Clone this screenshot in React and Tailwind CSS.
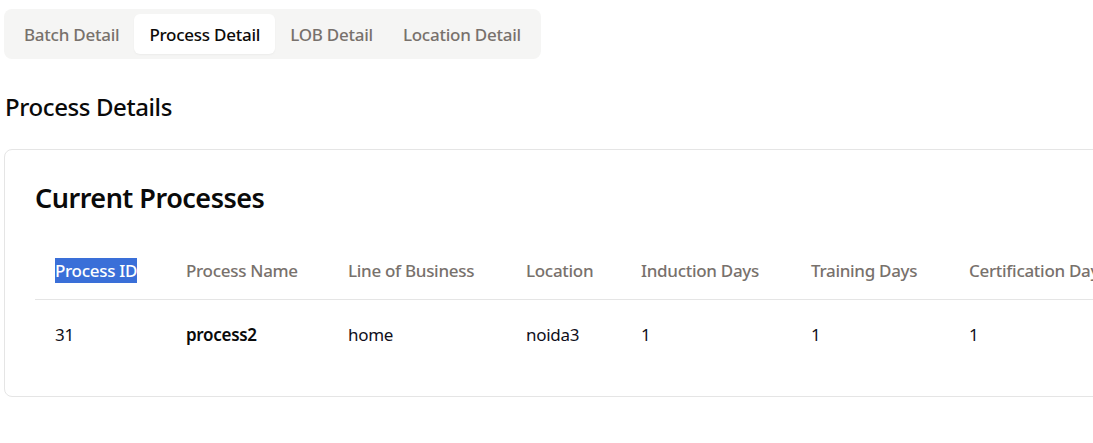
import React from "react";

const cols = ["Process ID", "Process Name", "Line of Business", "Location", "Induction Days", "Training Days", "Certification Days", "OJT Days"];
const row = ["31", "process2", "home", "noida3", "1", "1", "1", "1"];

export default function App() {
  return (
    <div
      className="w-[1093px] h-[443px] overflow-hidden bg-white px-[4px] pt-[9px]"
      style={{ fontFamily: '"Noto Sans", "Open Sans", sans-serif' }}
    >
      <div className="inline-flex rounded-lg bg-[#f5f5f4] p-[5px]">
        {["Batch Detail", "Process Detail", "LOB Detail", "Location Detail"].map((t) => (
          <div
            key={t}
            className={
              "h-[40px] flex items-center pt-[2px] px-[15px] rounded-md text-[17px] font-medium tracking-[-0.25px] " +
              (t === "Process Detail"
                ? "bg-white text-[#0c0a09] shadow-[0_1px_2px_rgba(0,0,0,0.04)]"
                : "text-[#78716c]")
            }
          >
            {t}
          </div>
        ))}
      </div>

      <h2 className="mt-[32px] ml-[1px] text-[24px] leading-[32px] font-medium text-[#0a0a0a] tracking-[-0.4px]">
        Process Details
      </h2>

      <div className="mt-[26px] w-[1200px] rounded-lg border border-[#e5e5e5] bg-white px-[30px] pt-[28px] pb-[26px]">
        <h3 className="text-[27px] leading-[40px] font-semibold text-[#0a0a0a] tracking-[-0.5px]">
          Current Processes
        </h3>
        <div className="mt-[24px] grid grid-cols-[131px_162px_178px_115px_170px_158px_190px_140px]">
          {cols.map((c, i) => (
            <div
              key={c}
              className="h-[58px] flex items-center px-[20px] border-b border-[#e5e5e5] text-[17px] font-medium text-[#78716c] whitespace-nowrap tracking-[-0.3px]"
            >
              {i === 0 ? (
                <span className="bg-[#3a6fd8] text-white leading-[25px]">{c}</span>
              ) : (
                c
              )}
            </div>
          ))}
          {row.map((v, i) => (
            <div
              key={i}
              className={
                "h-[70px] flex items-center px-[20px] text-[17px] whitespace-nowrap tracking-[-0.3px] " +
                (i === 1 ? "font-semibold text-[#0a0a0a]" : "text-[#0f0f1a]")
              }
            >
              {v}
            </div>
          ))}
        </div>
      </div>
    </div>
  );
}
